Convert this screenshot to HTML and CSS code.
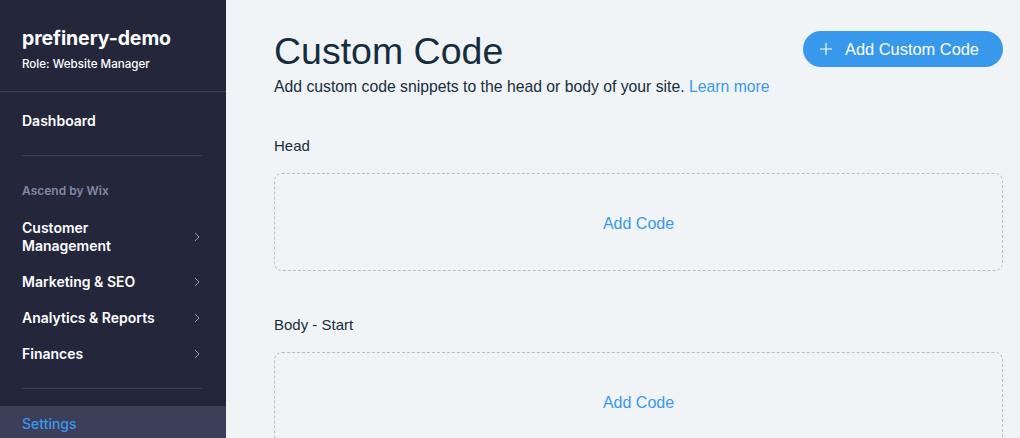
FILE: index.html
```html
<!DOCTYPE html>
<html>
<head>
<meta charset="utf-8">
<link rel="stylesheet" href="styles.css">
</head>
<body>
<div class="app">
  <aside class="sidebar">
    <div class="site">
      <div class="site-name">prefinery-demo</div>
      <div class="site-role">Role: Website Manager</div>
    </div>
    <nav class="nav">
      <div class="nav-item">Dashboard</div>
      <div class="divider"></div>
      <div class="nav-group">Ascend by Wix</div>
      <div class="nav-item has-sub"><span>Customer<br>Management</span><svg class="chev" viewBox="0 0 6 10"><path d="M1 1l4 4-4 4" fill="none" stroke="currentColor" stroke-width="1"/></svg></div>
      <div class="nav-item has-sub"><span>Marketing &amp; SEO</span><svg class="chev" viewBox="0 0 6 10"><path d="M1 1l4 4-4 4" fill="none" stroke="currentColor" stroke-width="1"/></svg></div>
      <div class="nav-item has-sub"><span>Analytics &amp; Reports</span><svg class="chev" viewBox="0 0 6 10"><path d="M1 1l4 4-4 4" fill="none" stroke="currentColor" stroke-width="1"/></svg></div>
      <div class="nav-item has-sub"><span>Finances</span><svg class="chev" viewBox="0 0 6 10"><path d="M1 1l4 4-4 4" fill="none" stroke="currentColor" stroke-width="1"/></svg></div>
      <div class="divider bottom"></div>
      <div class="nav-item active">Settings</div>
    </nav>
  </aside>
  <main class="main">
    <header class="header">
      <div class="titles">
        <h1 class="title">Custom Code</h1>
        <p class="subtitle">Add custom code snippets to the head or body of your site. <a class="link">Learn more</a></p>
      </div>
      <button class="btn"><svg class="plus" viewBox="0 0 12 12"><path d="M6 0v12M0 6h12" stroke="currentColor" stroke-width="1.2"/></svg>Add Custom Code</button>
    </header>
    <section class="section">
      <div class="section-label">Head</div>
      <div class="dropzone">Add Code</div>
    </section>
    <section class="section">
      <div class="section-label">Body - Start</div>
      <div class="dropzone">Add Code</div>
    </section>
  </main>
</div>
</body>
</html>
```

FILE: styles.css
```css
html, body { margin: 0; padding: 0; }
body { width: 1020px; height: 438px; overflow: hidden; background: #f0f4f7; }
.app { display: flex; height: 438px; }
.sidebar {
  width: 226px; flex: none; background: #24263c; color: #fff;
  font-family: "Inter", "Noto Sans", sans-serif;
  display: flex; flex-direction: column; overflow: hidden;
}
.site { flex: none; padding: 26px 22px 0; height: 65px; border-bottom: 1px solid #3d3f58; }
.site-name { font-size: 19.5px; font-weight: 700; line-height: 24px; letter-spacing: -0.1px; }
.site-role { font-size: 11.6px; line-height: 16px; margin-top: 6px; font-weight: 500; }
.nav { flex: none; display: flex; flex-direction: column; padding-top: 20px; }
.nav-item {
  flex: none;
  font-size: 14px; font-weight: 600; line-height: 18px; padding: 0 22px;
  display: flex; align-items: center; justify-content: space-between;
  min-height: 18px;
}
.nav-item.has-sub { padding: 9px 26px 9px 22px; }
.chev { width: 6px; height: 10px; color: #9a9cb3; flex: none; }
.divider { flex: none; height: 1px; background: #3d3f58; margin: 25px 24px 27px 22px; }
.divider.bottom { margin: 16px 24px 17px 22px; }
.nav-group { font-size: 12px; font-weight: 600; color: #7e8aa8; padding: 0 22px; line-height: 16px; margin-bottom: 11px; }
.nav-item.active { background: #3c3e5a; color: #3899ec; font-weight: 500; padding-top: 9px; padding-bottom: 9px; }

.main { flex: 1; padding: 31px 17px 0 48px; font-family: "Liberation Sans", Arial, sans-serif; color: #162d3d; }
.header { display: flex; justify-content: space-between; align-items: flex-start; }
.title { margin: 0; font-size: 37.5px; font-weight: 400; line-height: 40px; color: #162d3d; }
.subtitle { margin: 7px 0 0; font-size: 15.75px; line-height: 18px; color: #162d3d; }
.link { color: #3899ec; }
.btn {
  display: flex; align-items: center; gap: 13px; height: 36px; padding: 0 24px 0 17px;
  border: none; border-radius: 18px; background: #3899ec; color: #fff;
  font-family: "Liberation Sans", Arial, sans-serif; font-size: 16.4px;
}
.plus { width: 12px; height: 12px; }
.section { margin-top: 41px; }
.section + .section { margin-top: 45px; }
.section-label { font-size: 15px; line-height: 18px; color: #162d3d; margin-bottom: 18px; }
.dropzone {
  height: 92px; padding-top: 4px; border: 1px dashed #b6c1cd; border-radius: 8px;
  display: flex; align-items: center; justify-content: center;
  color: #3899ec; font-size: 16px;
}
```
